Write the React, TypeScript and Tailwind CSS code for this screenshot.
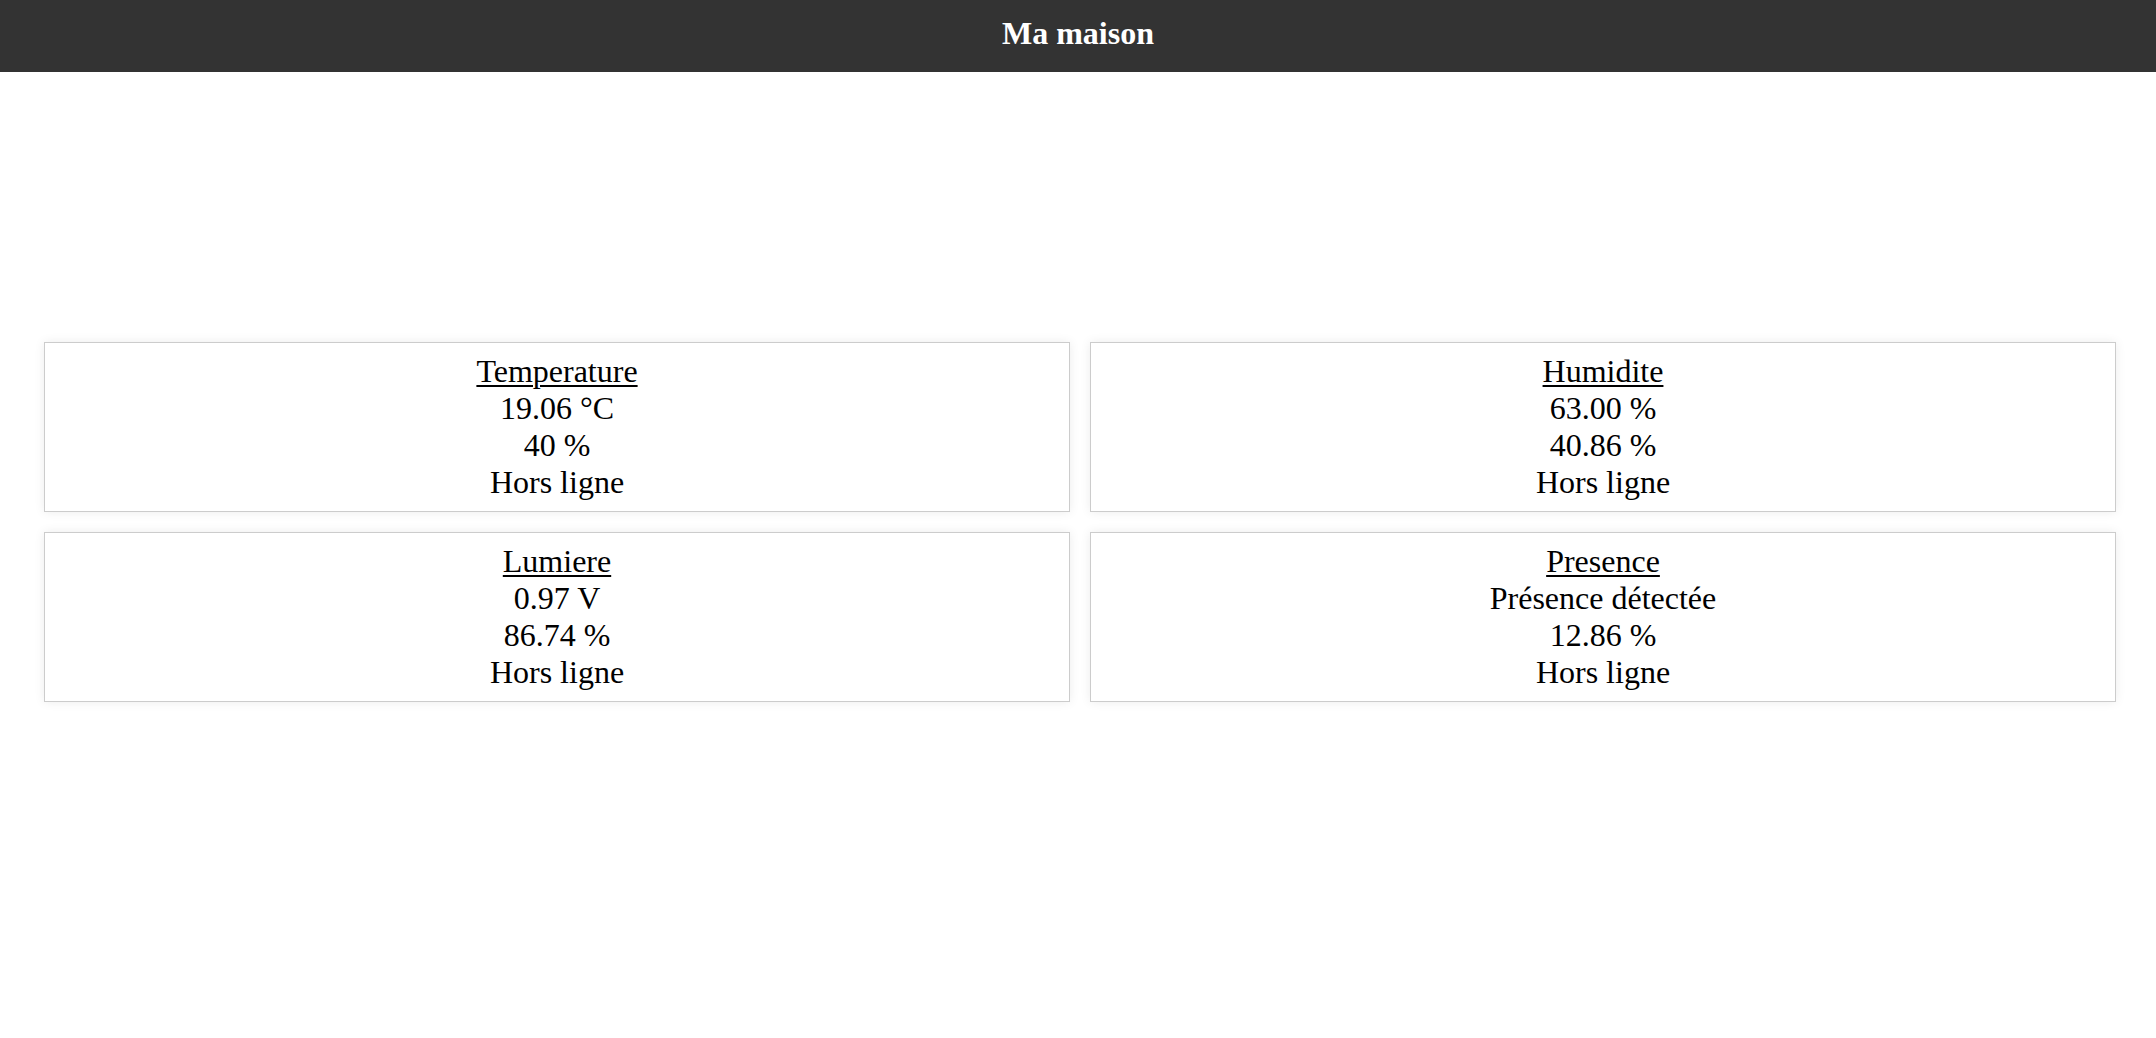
import React from "react";

type Sensor = {
  title: string;
  value: string;
  level: string;
  status: string;
};

const sensors: Sensor[] = [
  { title: "Temperature", value: "19.06 °C", level: "40 %", status: "Hors ligne" },
  { title: "Humidite", value: "63.00 %", level: "40.86 %", status: "Hors ligne" },
  { title: "Lumiere", value: "0.97 V", level: "86.74 %", status: "Hors ligne" },
  { title: "Presence", value: "Présence détectée", level: "12.86 %", status: "Hors ligne" },
];

function SensorCard({ sensor }: { sensor: Sensor }) {
  return (
    <div className="border border-[#cccccc] bg-white py-[10px] text-center shadow-[0_0_10px_rgba(0,0,0,0.08)]">
      <div className="underline decoration-2 underline-offset-[3px]">{sensor.title}</div>
      <div>{sensor.value}</div>
      <div>{sensor.level}</div>
      <div>{sensor.status}</div>
    </div>
  );
}

export default function App() {
  return (
    <div
      className="min-h-screen bg-white text-black"
      style={{ fontFamily: '"Liberation Serif", "Times New Roman", serif' }}
    >
      <header className="h-[72px] bg-[#333333] pt-[15px] text-center">
        <h1 className="text-[32px] font-bold leading-[37px] text-white">Ma maison</h1>
      </header>

      <main className="pt-[270px] pl-[44px] pr-[40px]">
        <div className="grid grid-cols-2 gap-[20px] text-[32px] leading-[37px]">
          {sensors.map((s) => (
            <SensorCard key={s.title} sensor={s} />
          ))}
        </div>
      </main>
    </div>
  );
}
